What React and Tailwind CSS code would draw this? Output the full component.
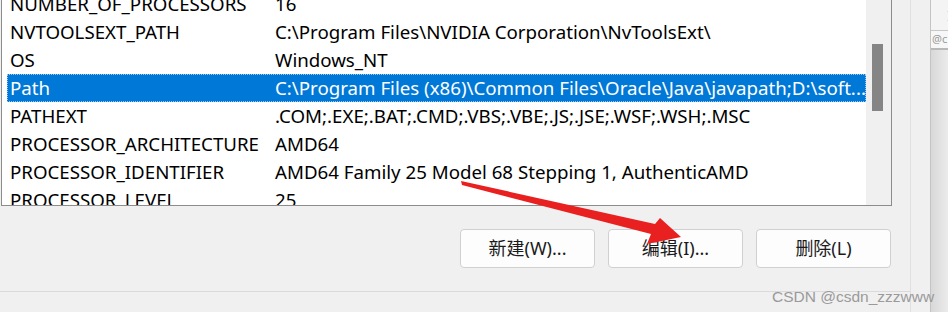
import React from "react";

const rows = [
  ["NUMBER_OF_PROCESSORS", "16"],
  ["NVTOOLSEXT_PATH", "C:\\Program Files\\NVIDIA Corporation\\NvToolsExt\\"],
  ["OS", "Windows_NT"],
  ["Path", "C:\\Program Files (x86)\\Common Files\\Oracle\\Java\\javapath;D:\\soft..."],
  ["PATHEXT", ".COM;.EXE;.BAT;.CMD;.VBS;.VBE;.JS;.JSE;.WSF;.WSH;.MSC"],
  ["PROCESSOR_ARCHITECTURE", "AMD64"],
  ["PROCESSOR_IDENTIFIER", "AMD64 Family 25 Model 68 Stepping 1, AuthenticAMD"],
  ["PROCESSOR_LEVEL", "25"],
];

const font = { fontFamily: '"Noto Sans", "Noto Sans CJK SC", sans-serif' };

function Row({ name, value, selected }) {
  return (
    <div
      className={
        "flex h-[28px] items-center ml-[5px] " +
        (selected
          ? "bg-[#0078d7] text-white outline-1 outline-dotted outline-[#9cc8f0] -outline-offset-1"
          : "text-[#000]")
      }
    >
      <div className="w-[268px] pl-[3px] shrink-0 whitespace-nowrap">{name}</div>
      <div className="whitespace-nowrap">{value}</div>
    </div>
  );
}

function Btn({ children }) {
  return (
    <div className="w-[135px] h-[39px] flex items-center justify-center rounded-[4px] border border-[#d0d0d0] bg-[#fdfdfd] text-[18px] text-[#1a1a1a]">
      {children}
    </div>
  );
}

export default function App() {
  return (
    <div
      className="relative w-[948px] h-[312px] overflow-hidden bg-[#f0f0f0] flex"
      style={font}
    >
      {/* main dialog area */}
      <div className="w-[911px] h-full flex flex-col border-r border-[#e0e0e0] shrink-0">
        <div className="flex">
          {/* list box */}
          <div className="ml-[1px] w-[891px] h-[206px] bg-white border-l border-r border-b border-[#8c8c8c] flex overflow-hidden">
            <div className="flex-1 overflow-hidden text-[18.7px] leading-none">
              <div className="-mt-[10px]">
                {rows.map(([n, v]) => (
                  <Row key={n} name={n} value={v} selected={n === "Path"} />
                ))}
              </div>
            </div>
            <div className="w-[25px] h-full bg-[#f0f0f0] shrink-0 pt-[44px] pl-[6px]">
              <div className="w-[11px] h-[67px] bg-[#858585]" />
            </div>
          </div>
        </div>
        <div className="flex justify-end gap-[13px] pr-[19px] mt-[23px]">
          <Btn>新建(W)...</Btn>
          <Btn>编辑(I)...</Btn>
          <Btn>删除(L)</Btn>
        </div>
        <div className="mt-[23px] h-px bg-[#dadada]" />
      </div>
      <div className="w-[19px] shrink-0" />
      {/* right strip */}
      <div className="flex-1 border-l border-[#c4c4c4] bg-gradient-to-r from-[#d8d8d8] to-[#ebebeb] flex flex-col">
        <div className="h-[31px] bg-[#f4f4f4] border-b border-[#c8c8c8] flex items-center justify-end text-[14px] text-[#555] overflow-hidden">
          <span className="-mr-[4px]">I</span>
        </div>
        <div className="h-[19px] bg-[#f7f7f7] border-b-2 border-[#b8b8b8] flex items-center text-[11px] text-[#999] pl-[1px] overflow-hidden whitespace-nowrap">
          @c
        </div>
      </div>

      {/* watermark */}
      <div
        className="absolute left-[772px] top-[285px] text-[15.5px] text-[#9a9a9a] whitespace-nowrap"
        style={{ fontFamily: '"Liberation Sans", Arial, sans-serif' }}
      >
        CSDN @csdn_zzzwww
      </div>

      {/* red arrow */}
      <svg
        className="absolute left-0 top-0 pointer-events-none"
        width="948"
        height="312"
      >
        <polygon
          points="461,181 655,224 660,218 681,237 647,244 651,234 462,185"
          fill="#e8201f"
        />
      </svg>
    </div>
  );
}
